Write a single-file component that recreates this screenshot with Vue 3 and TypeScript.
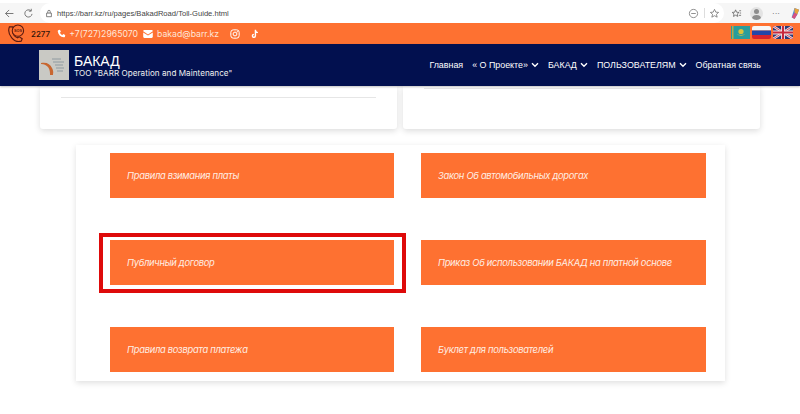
<script setup lang="ts">
const navItems = [
  { label: 'Главная', caret: false },
  { label: '« О Проекте»', caret: true },
  { label: 'БАКАД', caret: true },
  { label: 'ПОЛЬЗОВАТЕЛЯМ', caret: true },
  { label: 'Обратная связь', caret: false },
]
const docs = [
  { label: 'Правила взимания платы', marked: false },
  { label: 'Закон Об автомобильных дорогах', marked: false },
  { label: 'Публичный договор', marked: true },
  { label: 'Приказ Об использовании БАКАД на платной основе', marked: false },
  { label: 'Правила возврата платежа', marked: false },
  { label: 'Буклет для пользователей', marked: false },
]
</script>

<template>
  <div class="page">
    <header class="browser">
      <svg class="b-icon back" viewBox="0 0 14 14"><path d="M12 7H2M6.500 2.500 2 7l4.500 4.500" fill="none" stroke="#666" stroke-width="1.100" /></svg>
      <svg class="b-icon reload" viewBox="0 0 14 14"><path d="M11.500 7.500A4.600 4.600 0 1 1 10 3.500M10.500 1v3h-3" fill="none" stroke="#666" stroke-width="1.100" /></svg>
      <div class="omnibox">
        <svg class="lock" viewBox="0 0 10 10"><path d="M2 4.500h6v4.500H2zM3.500 4.500V2.500a1.500 1.500 0 0 1 3 0v2" fill="none" stroke="#555" stroke-width=".9" /></svg>
        <span class="url">https://barr.kz/ru/pages/BakadRoad/Toll-Guide.html</span>
        <span class="spacer"></span>
        <svg class="b-icon" viewBox="0 0 12 12"><circle cx="6" cy="6" r="4.500" fill="none" stroke="#888" /><path d="M3.500 6h5" stroke="#888" /></svg>
        <i class="divider"></i>
        <svg class="b-icon star" viewBox="0 0 12 12"><path d="m6 1.500 1.400 3 3.100.3-2.400 2.100.8 3.100L6 8.400 3.100 10l.8-3.100L1.500 4.800l3.100-.3z" fill="none" stroke="#777" stroke-width=".9" /></svg>
      </div>
      <svg class="b-icon fav" viewBox="0 0 12 12"><path d="m5 2 1.100 2.600 2.700.2-2 1.800.6 2.600L5 7.900 2.700 9.200l.6-2.600-2-1.800 2.700-.2zM9 3h2M9.500 5.500H11M8.500 8H11" fill="none" stroke="#666" stroke-width=".9" /></svg>
      <span class="avatar"><i></i><b></b></span>
      <span class="dots">···</span>
      <svg class="copilot" viewBox="0 0 12 14"><path d="M6 1 11 3 9 8 6 13 3 11z" fill="#4a8fd8" /><path d="M6 1 11 3 9 8 6 6z" fill="#e9a13a" /><path d="M3 11 6 6 9 8 6 13z" fill="#d8517f" /></svg>
    </header>

    <div class="contact">
      <svg class="sos" viewBox="0 0 20 20">
        <path d="M2.500 3C1 7 2 11 5 14.500s7 4.500 10 3.500l1-2.500-3-2-2 1C8.500 13.500 6.500 11 6 8.500l1.500-2L6 3z" fill="none" stroke="#5a1a10" stroke-width="1.200" />
        <circle cx="11.500" cy="7" r="6" fill="#fe7131" stroke="#5a1a10" stroke-width="1.100" />
        <text x="11.500" y="8.400" class="sos-text">SOS</text>
      </svg>
      <span class="num">2277</span>
      <svg class="c-icon phone" viewBox="0 0 12 12"><path d="M1.500 1.500 4 1l1.200 2.800L3.800 5c.6 1.300 1.700 2.400 3.200 3.200L8.200 6.800 11 8l-.5 2.500C10 11 9.500 11 9 11 4.500 10.500 1.500 7.500 1 3c0-.5 0-1 .5-1.500z" fill="#fff" /></svg>
      <span class="c-text tel">+7(727)2965070</span>
      <svg class="c-icon mail" viewBox="0 0 12 10"><path d="M0 1.500C0 .7.700 0 1.500 0h9c.8 0 1.500.7 1.500 1.500L6 5.500z" fill="#fff" /><path d="M0 3v5.500C0 9.300.7 10 1.500 10h9c.8 0 1.500-.7 1.500-1.500V3L6 7z" fill="#fff" /></svg>
      <span class="c-text email">bakad@barr.kz</span>
      <svg class="c-icon insta" viewBox="0 0 12 12"><rect x="1" y="1" width="10" height="10" rx="3" fill="none" stroke="#fff" stroke-width="1.200" /><circle cx="6" cy="6" r="2.300" fill="none" stroke="#fff" stroke-width="1.200" /><circle cx="8.800" cy="3.200" r=".7" fill="#fff" /></svg>
      <svg class="c-icon tiktok" viewBox="0 0 12 12"><path d="M6.500 1v7.200a1.800 1.800 0 1 1-1.800-1.800M6.500 1.500c.3 1.700 1.500 2.700 3 2.800" fill="none" stroke="#fff" stroke-width="1.700" /></svg>
      <span class="spacer"></span>
      <div class="flags">
        <svg class="flag kz" viewBox="0 0 19 13"><rect width="19" height="13" fill="#2a9d9c" /><rect x="1" width="1.500" height="13" fill="#b9a84a" /><circle cx="10" cy="5.500" r="2.600" fill="#d9c23c" /><path d="M5.500 8.500c3 1.500 6 1.500 9 0-3 .5-6 .5-9 0z" fill="#d9c23c" /></svg>
        <svg class="flag ru" viewBox="0 0 19 13"><rect width="19" height="4.500" fill="#f6f6f6" /><rect y="4.500" width="19" height="4.500" fill="#2446a8" /><rect y="9" width="19" height="4" fill="#d8242c" /></svg>
        <svg class="flag uk" viewBox="0 0 20 13"><rect width="20" height="13" fill="#2a3a78" /><path d="M0 0 20 13M20 0 0 13" stroke="#f3dfe0" stroke-width="2.400" /><path d="M0 0 20 13M20 0 0 13" stroke="#c8283c" stroke-width=".8" /><path d="M10 0v13M0 6.500h20" stroke="#f3e6e6" stroke-width="3.800" /><path d="M10 0v13M0 6.500h20" stroke="#c8283c" stroke-width="2" /></svg>
      </div>
    </div>

    <nav class="navbar">
      <div class="brand">
        <div class="logo">
          <svg viewBox="0 0 30 30" class="logo-art">
            <path d="M2 13c6-1 9 1 11 5s1 5 1 7h-3c0-3 0-5-2-8-2-2-4-3-7-3z" fill="#c8662f" />
            <path d="M13 9h9M14 12h11M16 15h8M17 18h8M18 21h6" stroke="#8f9aa0" stroke-width="1" />
          </svg>
        </div>
        <div class="brand-text">
          <div class="brand-title">БАКАД</div>
          <div class="brand-sub">ТОО "BARR Operation and Maintenance"</div>
        </div>
      </div>
      <ul class="menu">
        <li v-for="item in navItems" :key="item.label" class="menu-item">
          <span>{{ item.label }}</span>
          <svg v-if="item.caret" class="caret" viewBox="0 0 8 6"><path d="M1 1.200 4 4.200l3-3" fill="none" stroke="#fff" stroke-width="1.400" /></svg>
        </li>
      </ul>
    </nav>

    <main class="content">
      <section class="cards">
        <article class="card card-left"><hr class="rule" /></article>
        <article class="card card-right"><hr class="rule" /></article>
      </section>

      <section class="panel">
        <a
          v-for="doc in docs"
          :key="doc.label"
          class="doc"
          :class="{ marked: doc.marked }"
        >{{ doc.label }}</a>
      </section>
    </main>
  </div>
</template>

<style scoped>
.page {
  width: 800px;
  height: 414px;
  overflow: hidden;
  background: #fff;
  font-family: "Liberation Sans", Arial, sans-serif;
}
.spacer { flex: 1; }

.browser {
  height: 20px;
  margin-top: 3px;
  background: #f6f6f6;
  display: flex;
  align-items: center;
  padding-left: 2px;
}
.b-icon { width: 11px; height: 11px; flex: none; }
.back { margin-left: 2px; width: 11px; height: 11px; }
.reload { margin-left: 8px; width: 11px; height: 11px; }
.omnibox {
  margin-left: 6px;
  width: 684px;
  height: 20px;
  background: #fff;
  border-radius: 10px;
  display: flex;
  align-items: center;
  padding-left: 5px;
  padding-right: 4px;
  box-sizing: border-box;
  flex: none;
}
.lock { width: 8px; height: 9px; flex: none; }
.url {
  margin-left: 4px;
  font-size: 7.600px;
  color: #444;
}
.divider { width: 1px; height: 10px; background: #ddd; margin: 0 4px 0 5px; }
.fav { margin-left: 7px; }
.avatar {
  margin-left: 8px;
  width: 13px;
  height: 13px;
  border-radius: 50%;
  background: #e3e3e3;
  position: relative;
  overflow: hidden;
  flex: none;
}
.avatar i {
  position: absolute; left: 4px; top: 2px; width: 5px; height: 5px;
  border-radius: 50%; background: #8d8d8d;
}
.avatar b {
  position: absolute; left: 2px; top: 8px; width: 9px; height: 7px;
  border-radius: 50%; background: #8d8d8d;
}
.dots { margin-left: 9px; font-size: 8px; color: #555; width: 13px; }
.copilot { margin-left: 4px; width: 11px; height: 13px; flex: none; }

.contact {
  height: 21px;
  background: #fe7131;
  display: flex;
  align-items: center;
  padding-left: 7px;
  padding-right: 7px;
}
.sos { width: 19px; height: 19px; flex: none; }
.sos-text { font-size: 4px; font-weight: 700; fill: #5a1a10; text-anchor: middle; font-family: "Liberation Sans", sans-serif; }
.num { margin-left: 5px; font-size: 8px; color: #30140a; font-family: "Inter", sans-serif; font-weight: 500; }
.c-icon { flex: none; }
.phone { width: 9px; height: 9px; margin-left: 7px; }
.mail { width: 10px; height: 8px; }
.c-text {
  font-family: "Inter", sans-serif;
  color: #ffe6d8;
}
.tel { margin-left: 3px; margin-right: 5px; font-size: 8.700px; }
.email { margin-left: 4px; font-size: 8.700px; }
.insta { width: 10px; height: 10px; margin-left: 11px; }
.tiktok { width: 10px; height: 10px; margin-left: 10px; }
.flags { display: flex; gap: 2px; align-items: center; margin-top: -2px; }
.flag { height: 13px; flex: none; }
.kz { width: 19px; }
.ru { width: 19px; border-radius: 2px; }
.uk { width: 20px; }

.navbar {
  height: 42px;
  background: #02104f;
  display: flex;
  align-items: center;
  padding-left: 39px;
  padding-right: 39px;
  box-shadow: 0 1px 2px rgba(0, 0, 0, .25);
  position: relative;
}
.brand { display: flex; align-items: center; gap: 5px; }
.logo {
  width: 30px;
  height: 30px;
  background: #c9c9c4;
  flex: none;
}
.logo-art { display: block; width: 30px; height: 30px; }
.brand-text { color: #fff; margin-top: 1px; }
.brand-title { font-size: 14px; line-height: 15px; font-family: "Liberation Sans", sans-serif; }
.brand-sub { font-size: 8.100px; line-height: 9px; font-family: "Inter", sans-serif; letter-spacing: .05px; color: #f0f0f0; white-space: nowrap; }
.menu {
  list-style: none;
  margin: 0 0 0 auto;
  padding: 0;
  display: flex;
  align-items: center;
  gap: 9px;
}
.menu-item {
  display: flex;
  align-items: center;
  gap: 3px;
  font-size: 8.900px;
  color: #fff;
  white-space: nowrap;
}
.caret { width: 8px; height: 6px; flex: none; }

.cards {
  margin: 0 40px;
  display: flex;
  gap: 6px;
}
.card {
  width: 357px;
  height: 43px;
  box-sizing: border-box;
  background: #fff;
  border-radius: 0 0 3px 3px;
  box-shadow: 0 2px 6px rgba(0, 0, 0, .14);
}
.rule {
  border: 0;
  height: 1px;
  background: #e6e6e6;
  margin: 0 21px;
}
.card-left { padding-top: 11px; }
.card-right { padding-top: 2px; }

.panel {
  margin: 16px 0 0 76px;
  width: 649px;
  box-sizing: border-box;
  padding: 8px 19px 9px 34px;
  display: grid;
  grid-template-columns: 284px 285px;
  column-gap: 27px;
  row-gap: 42px;
  box-shadow: 0 2px 6px rgba(0, 0, 0, .13);
}
.doc {
  height: 45px;
  display: flex;
  align-items: center;
  padding-left: 17px;
  background: #fe7131;
  color: #ffeee4;
  font-family: "Inter", sans-serif;
  font-size: 9.400px;
  letter-spacing: -.3px;
  font-style: italic;
  position: relative;
}
.marked::after {
  content: "";
  position: absolute;
  inset: -7px -12px -8px -11px;
  border: 4px solid #de0a0a;
}
</style>

<style>
html, body { margin: 0; background: #fff; }
</style>
